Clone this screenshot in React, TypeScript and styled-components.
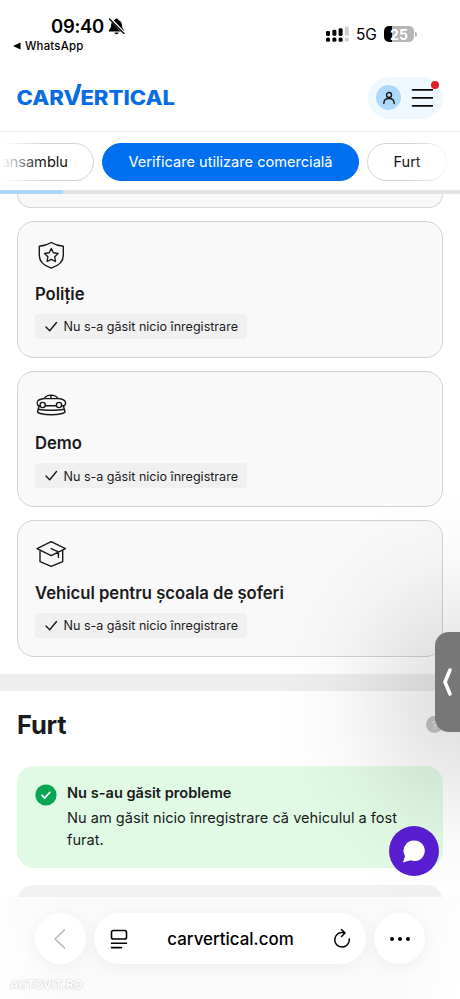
import React from "react";
import styled, { createGlobalStyle } from "styled-components";

const Global = createGlobalStyle`
  *, *::before, *::after { box-sizing: border-box; }
  body { margin: 0; background: #fff; font-family: Inter, "Noto Sans", sans-serif; color: #1b1b1d; overflow: hidden; }
  svg { display: block; flex: none; }
`;

const Screen = styled.div`
  position: relative;
  width: 460px;
  height: 999px;
  display: flex;
  flex-direction: column;
  overflow: hidden;
  background: #fff;
`;

const StatusBar = styled.div`
  height: 64px;
  display: flex;
  justify-content: space-between;
  padding: 15px 43px 0 12px;
  color: #000;
`;

const StatusLeft = styled.div`
  display: flex;
  flex-direction: column;
`;

const Clock = styled.div`
  display: flex;
  align-items: center;
  gap: 4px;
  height: 22px;
  padding-left: 39px;
  font-size: 18.5px;
  font-weight: 600;
  letter-spacing: -0.3px;
`;

const BackTo = styled.div`
  display: flex;
  align-items: center;
  gap: 4px;
  height: 17px;
  font-size: 11.4px;
  font-weight: 500;
  letter-spacing: 0.2px;
`;

const StatusRight = styled.div`
  display: flex;
  align-items: center;
  height: 38px;
`;

const Network = styled.span`
  width: 28px;
  font-size: 15.5px;
  letter-spacing: -0.2px;
`;

const Battery = styled.div`
  width: 30px;
  height: 16px;
  display: flex;
  align-items: center;
  justify-content: center;
  border-radius: 5px;
  background: linear-gradient(90deg, #000 0 8px, #b6b6b6 8px);
  color: #fff;
  font-size: 14px;
  font-weight: 700;
`;

const BatteryTip = styled.i`
  width: 2px;
  height: 5px;
  margin-left: 1px;
  border-radius: 0 2px 2px 0;
  background: #b6b6b6;
`;

const Header = styled.header`
  height: 68px;
  display: flex;
  align-items: center;
  justify-content: space-between;
  padding: 0 17px 0 16px;
  border-bottom: 1px solid #efefef;
`;

const HeaderActions = styled.div`
  position: relative;
  width: 75px;
  height: 42px;
  display: flex;
  align-items: center;
  gap: 9px;
  padding-left: 8px;
  border-radius: 21px;
  background: #eff8ff;
`;

const Avatar = styled.div`
  width: 25px;
  height: 25px;
  display: grid;
  place-items: center;
  border-radius: 50%;
  background: #acd8fc;
`;

const AlertDot = styled.i`
  position: absolute;
  right: 4px;
  top: 4px;
  width: 8px;
  height: 8px;
  border-radius: 50%;
  background: #dd1f26;
`;

const Tabs = styled.nav`
  position: relative;
  height: 58px;
  display: flex;
  align-items: center;
  gap: 8px;
  padding-top: 1.5px;
  overflow: hidden;
  &::before, &::after {
    content: "";
    position: absolute;
    top: 0;
    bottom: 0;
    z-index: 1;
  }
  &::before { left: 0; width: 42px; background: linear-gradient(90deg, #fff 5%, rgba(255,255,255,0)); }
  &::after { right: 0; width: 48px; background: linear-gradient(270deg, #fff 10%, rgba(255,255,255,0)); }
`;

const Pill = styled.div<{ $width: number; $active?: boolean; $end?: boolean }>`
  flex: none;
  width: ${p => p.$width}px;
  height: 38px;
  display: flex;
  align-items: center;
  justify-content: ${p => (p.$end ? "flex-end" : "center")};
  padding-right: ${p => (p.$end ? 25 : 0)}px;
  margin-left: ${p => (p.$end ? -30 : 0)}px;
  border: 1px solid ${p => (p.$active ? "#0070f0" : "#d5d5d5")};
  border-radius: 19px;
  background: ${p => (p.$active ? "#0070f0" : "#fff")};
  color: ${p => (p.$active ? "#fff" : "#111")};
  font-size: 14.6px;
  white-space: nowrap;
`;

const Progress = styled.div`
  flex: none;
  height: 4px;
  background: linear-gradient(90deg, #a9d7fb 0 62.5px, #e3e3e3 62.5px);
`;

const Content = styled.main`
  height: 703px;
  overflow: hidden;
`;

const CardList = styled.section`
  display: flex;
  flex-direction: column;
  gap: 13px;
  height: 479.5px;
  padding: 0 17px;
`;

const CardTail = styled.div`
  height: 14px;
  flex: none;
  border: 1px solid #d5d5d5;
  border-top: 0;
  border-radius: 0 0 16px 16px;
  background: #f8f8f8;
`;

const Card = styled.article`
  flex: none;
  height: 136.5px;
  display: flex;
  flex-direction: column;
  align-items: flex-start;
  padding: 16px 17px;
  border: 1px solid #d3d3d3;
  border-radius: 17px;
  background: #f9f9f9;
`;

const CardTitle = styled.h3`
  margin: 11.7px 0 8.2px;
  font-size: 16.65px;
  line-height: 24px;
  font-weight: 600;
`;

const Badge = styled.div`
  height: 25px;
  display: flex;
  align-items: center;
  gap: 5px;
  padding: 1px 9px 0 10px;
  margin-left: -0.5px;
  border-radius: 4px;
  background: #f0f0f0;
  font-size: 12.55px;
  white-space: nowrap;
`;

const Divider = styled.div`
  height: 17px;
  background: #eeeeee;
`;

const Theft = styled.section`
  padding: 16px 17px 0;
`;

const SectionHead = styled.div`
  height: 36px;
  display: flex;
  align-items: center;
  justify-content: space-between;
`;

const SectionTitle = styled.h2`
  margin: 0;
  font-size: 25.5px;
  font-weight: 700;
  letter-spacing: -0.2px;
`;

const Help = styled.span`
  width: 17px;
  height: 17px;
  display: grid;
  place-items: center;
  border-radius: 50%;
  background: #c8c8c8;
  color: #f4f4f4;
  font-size: 11px;
`;

const Success = styled.div`
  height: 102px;
  display: flex;
  gap: 10px;
  margin-top: 23.5px;
  padding: 16px 18px;
  border-radius: 17px;
  background: #e1fae5;
  font-size: 14.6px;
  line-height: 22px;
`;

const SuccessIcon = styled.div`
  margin-top: 2px;
`;

const SuccessTitle = styled.div`
  margin-bottom: 3px;
  font-weight: 600;
`;

const SuccessText = styled.div`
  width: 345px;
`;

const NextPanel = styled.div`
  height: 60px;
  margin-top: 17px;
  border-radius: 17px;
  background: #f1f1f1;
`;

const BrowserBar = styled.footer`
  flex: 1;
  display: flex;
  flex-direction: column;
  padding: 16px 35px 0;
  background: linear-gradient(90deg, #ffffff00, #fafafa 15% 85%, #ffffff00), linear-gradient(#fdfdfd, #fff);
`;

const Controls = styled.div`
  display: flex;
  gap: 8px;
`;

const RoundButton = styled.div`
  width: 51px;
  height: 51px;
  display: grid;
  place-items: center;
  border-radius: 50%;
  background: #fff;
  box-shadow: 0 3px 18px rgba(0, 0, 0, 0.05);
`;

const Address = styled.div`
  width: 272px;
  height: 51px;
  display: flex;
  align-items: center;
  justify-content: space-between;
  padding: 0 15px 0 16px;
  border-radius: 26px;
  background: #fff;
  color: #000;
  box-shadow: 0 3px 18px rgba(0, 0, 0, 0.05);
  font-size: 16.9px;
  font-weight: 500;
`;

const Watermark = styled.div`
  margin: 14px 0 0 -25px;
  color: #fff;
  font-size: 11.6px;
  line-height: 14px;
  font-weight: 700;
  text-shadow: 0 0 1.5px #aaa;
`;

const EdgeShade = styled.div`
  position: absolute;
  right: 0;
  top: 450px;
  width: 260px;
  height: 500px;
  pointer-events: none;
  background: radial-gradient(190px 215px at 100% 50%, rgba(0,0,0,.13), rgba(0,0,0,.105) 18%, rgba(0,0,0,.062) 42%, rgba(0,0,0,.025) 65%, rgba(0,0,0,.007) 85%, transparent);
`;

const EdgeHandle = styled.div`
  position: absolute;
  right: 0;
  top: 632px;
  width: 25px;
  height: 100px;
  display: grid;
  align-items: center;
  padding-left: 7px;
  border-radius: 14px 0 0 14px;
  background: #777;
`;

const Chat = styled.div`
  position: absolute;
  left: 389px;
  top: 826px;
  width: 50px;
  height: 50px;
  display: grid;
  place-items: center;
  border-radius: 50%;
  background: #581dcf;
`;

const Line = ({ children, w = 32, h = 32 }: { children: React.ReactNode; w?: number; h?: number }) => (
  <svg width={w} height={h} viewBox={`0 0 ${w} ${h}`} fill="none" stroke="#19191b" strokeWidth="1.4" strokeLinecap="round" strokeLinejoin="round">{children}</svg>
);

const PoliceIcon = () => (
  <Line>
    <path d="M16.300 4.500c4 2.500 7.500 3.300 12 3.700v9.300c0 5.800-5 10.300-12 12.700-7-2.400-12-6.900-12-12.700V8.200c4.500-.4 8-1.200 12-3.700Z" />
    <path d="m16.300 10.500 2.100 4.300 4.700.7-3.400 3.300.8 4.700-4.200-2.200-4.200 2.200.8-4.700-3.400-3.300 4.700-.7Z" />
  </Line>
);

const DemoIcon = () => (
  <Line>
    <path d="M5 17.700H3.200c-1.300-1.500-1.200-4 0-5.300 1.500-1.300 4-1.500 6-1.900 1.300-2.300 3.500-3.400 6.800-3.400 3.400 0 5.700 1.300 7 3.400 2.700.2 5.500.8 6.900 2.500.8 1.500.7 3.600-.5 4.700h-2.600M10.400 17.700h10.900M9.200 10.600h13.600M16 7.200v3.300" />
    <circle cx="7.700" cy="17" r="2.600" />
    <circle cx="24" cy="17" r="2.600" />
    <path d="m4 18.500-1.500 5c-.2 1.800 6 3.200 13.700 3.200s14-1.400 13.800-3.200l-1.500-5M3.700 21.300c5.800 1.300 19 1.300 25 0" />
  </Line>
);

const SchoolIcon = () => (
  <Line>
    <path d="m2 11.600 14.200-7 14.200 7-14.200 7ZM5 13.300v11.300l11.200 4.800 11.500-4.800V13.300M16.200 11.600l7.200 3.200v5.500" />
  </Line>
);

const records = [
  { title: "Poliție", Icon: PoliceIcon },
  { title: "Demo", Icon: DemoIcon },
  { title: "Vehicul pentru școala de șoferi", Icon: SchoolIcon },
];

const Signal = () => (
  <svg width="30" height="17" viewBox="0 0 30 17">
    {[0, 6.400, 12.600, 18.800].map((x, i) => (
      <g key={x} fill={i === 3 ? "#d0d0d0" : "#000"}>
        <rect x={x} y={[5, 3.800, 2.300, 0.500][i]} width="4" height={[5, 6, 7.600, 9.300][i]} rx="1.300" />
        <rect x={x} y="11.500" width="4" height="4.200" rx="1.500" />
      </g>
    ))}
  </svg>
);

const Logo = () => (
  <svg width="162" height="28" viewBox="0 0 162 28" fill="#086ce4">
    <text x="0.500" y="21" fontFamily="Inter, sans-serif" fontSize="20" fontWeight="800" textLength="158.500" lengthAdjust="spacingAndGlyphs">CARVERTICAL</text>
    <path d="m57 17 4.800-17.500h4L60.500 17Z" />
  </svg>
);

export default function App() {
  return (
    <>
      <Global />
      <Screen>
        <StatusBar>
          <StatusLeft>
            <Clock>
              09:40
              <svg width="17" height="17" viewBox="0 0 17 17">
                <path d="M8.500 .5a2 2 0 0 0-2 1.500C4 3 3 5.300 3 7.500c0 2.500-1 3.500-2 4.500v1.500h15V12c-1-1-2-2-2-4.500 0-2.200-1-4.500-3.500-5.500a2 2 0 0 0-2-1.500ZM6.300 14.500a2.300 2.300 0 0 0 4.400 0Z" />
                <path d="m2.500 1 13.500 14" stroke="#fff" strokeWidth="2.600" />
                <path d="m1.500 1 14.500 14.500" stroke="#000" strokeWidth="1.200" strokeLinecap="round" />
              </svg>
            </Clock>
            <BackTo>
              <svg width="9" height="8" viewBox="0 0 9 8"><path d="M1 4 8.500.5v7Z" /></svg>
              WhatsApp
            </BackTo>
          </StatusLeft>
          <StatusRight>
            <Signal />
            <Network>5G</Network>
            <Battery>25</Battery>
            <BatteryTip />
          </StatusRight>
        </StatusBar>

        <Header>
          <Logo />
          <HeaderActions>
            <Avatar>
              <Line w={14} h={14}><circle cx="7" cy="4" r="2.500" /><path d="M1.800 12.500c0-3.500 2.300-5 5.200-5s5.200 1.500 5.200 5" /></Line>
            </Avatar>
            <svg width="23" height="20" viewBox="0 0 23 20" stroke="#0b0b0b" strokeWidth="1.700" strokeLinecap="round"><path d="M2.500 1.800h20M2.500 9.800h20M2.500 17.800h20" /></svg>
            <AlertDot />
          </HeaderActions>
        </Header>

        <Tabs>
          <Pill $width={124} $end>ansamblu</Pill>
          <Pill $width={257} $active>Verificare utilizare comercială</Pill>
          <Pill $width={80}>Furt</Pill>
          <Pill $width={80} />
        </Tabs>
        <Progress />

        <Content>
          <CardList>
            <CardTail />
            {records.map(({ title, Icon }) => (
              <Card key={title}>
                <Icon />
                <CardTitle>{title}</CardTitle>
                <Badge>
                  <Line w={14} h={14}><path d="m1 7 3.700 3.700L11.500 2.500" /></Line>
                  Nu s-a găsit nicio înregistrare
                </Badge>
              </Card>
            ))}
          </CardList>
          <Divider />
          <Theft>
            <SectionHead>
              <SectionTitle>Furt</SectionTitle>
              <Help>?</Help>
            </SectionHead>
            <Success>
              <SuccessIcon>
                <svg width="22" height="22" viewBox="0 0 22 22"><circle cx="11" cy="11" r="10.600" fill="#08a552" /><path d="m7 11.300 2.700 2.700 5-5.500" fill="none" stroke="#fff" strokeWidth="1.800" strokeLinecap="round" strokeLinejoin="round" /></svg>
              </SuccessIcon>
              <div>
                <SuccessTitle>Nu s-au găsit probleme</SuccessTitle>
                <SuccessText>Nu am găsit nicio înregistrare că vehiculul a fost furat.</SuccessText>
              </div>
            </Success>
            <NextPanel />
          </Theft>
        </Content>

        <BrowserBar>
          <Controls>
            <RoundButton>
              <svg width="14" height="22" viewBox="0 0 14 22" fill="none" stroke="#b5b5b5" strokeWidth="1.500" strokeLinecap="round" strokeLinejoin="round"><path d="M10.500 2 1 11l9.500 9" /></svg>
            </RoundButton>
            <Address>
              <svg width="18" height="20" viewBox="0 0 18 20" fill="none" stroke="#000" strokeWidth="1.600" strokeLinecap="round"><rect x="1.500" y="1.500" width="15" height="8.500" rx="1.800" /><path d="M1.500 14.200h15M1.500 18.600h10" /></svg>
              carvertical.com
              <svg width="18" height="22" viewBox="0 0 18 22" fill="none" stroke="#000" strokeWidth="1.500" strokeLinecap="round" strokeLinejoin="round"><path d="M11 4.700a7.300 7.300 0 1 0 5.300 6.300M8.500 1.500l3.500 3.500-3.500 3.500" /></svg>
            </Address>
            <RoundButton>
              <svg width="22" height="6" viewBox="0 0 22 6"><circle cx="3" cy="3" r="2" /><circle cx="11" cy="3" r="2" /><circle cx="19" cy="3" r="2" /></svg>
            </RoundButton>
          </Controls>
          <Watermark>AUTOVIT.RO</Watermark>
        </BrowserBar>

        <EdgeShade />
        <EdgeHandle>
          <svg width="12" height="30" viewBox="0 0 12 30" fill="none" stroke="#fff" strokeWidth="3.600" strokeLinecap="round" strokeLinejoin="round"><path d="M8 3 3 15l5 12" /></svg>
        </EdgeHandle>
        <Chat>
          <svg width="24" height="24" viewBox="0 0 24 24" fill="#fff"><path d="M12.500 1.500a10.300 10.300 0 1 1-4 19.800L1 23.500l2-6.500A10.300 10.300 0 0 1 12.500 1.500Z" /></svg>
        </Chat>
      </Screen>
    </>
  );
}
